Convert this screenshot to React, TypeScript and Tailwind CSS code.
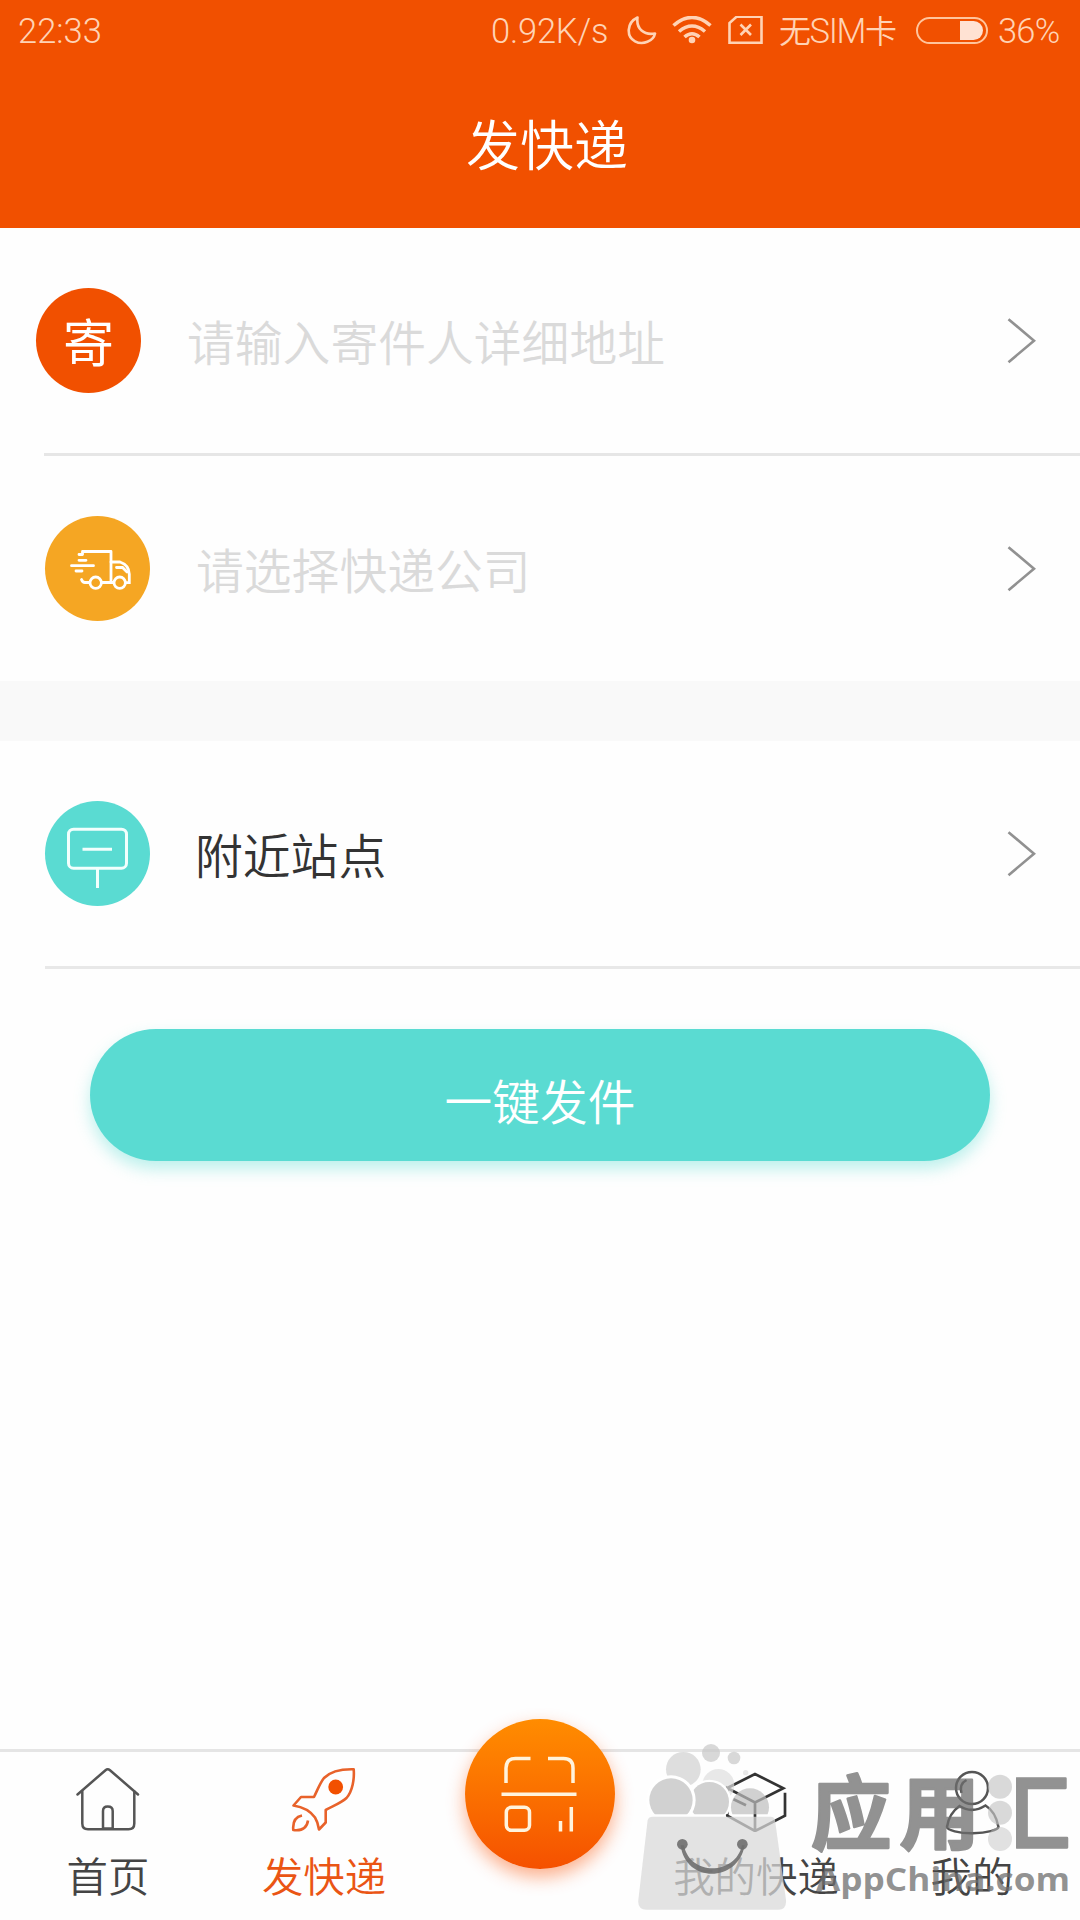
import React from "react";

const Chevron = () => (
  <svg className="mr-[44px] h-[48px] w-[30px] shrink-0" viewBox="0 0 30 48" fill="none" stroke="#919191" strokeWidth="2.6">
    <path d="M2.500 2.200 L28 23.700 L2.500 45.200" />
  </svg>
);

const TruckIcon = () => (
  <svg className="size-[105px]" viewBox="0 0 105 105" fill="none" stroke="#fff" strokeWidth="2.8" strokeLinecap="round">
    <path d="M34 38.5 h3.5 v-3 h28.5 v30.5" strokeLinejoin="round" />
    <path d="M66 46 h9 q9 3 9.300 12 v8.700 h-3 M68 66.500 h-11 M36.500 63.500 q1 3 3.500 3 h4" />
    <path d="M71.500 51.500 h6 l4.500 4.500" />
    <path d="M34 44.300 h7 M26.500 49.700 h22 M31 55 h6" />
    <circle cx="50.700" cy="66.700" r="5.700" />
    <circle cx="74.700" cy="66.700" r="5.700" />
  </svg>
);

const SignIcon = () => (
  <svg className="size-[105px]" viewBox="0 0 105 105" fill="none" stroke="#f2fffd" strokeWidth="3">
    <rect x="23.500" y="28.200" width="58" height="39" rx="5" />
    <path d="M37.500 48.300 h29.500 M52.500 67 v20" />
  </svg>
);

const HomeIcon = () => (
  <svg className="size-[66px]" viewBox="0 0 66 66" fill="none" stroke="#555" strokeWidth="2.5" strokeLinecap="round">
    <path d="M2.500 28.500 L30.500 4.200 Q32.700 2.400 35 4.200 L63 28.500" />
    <path d="M7.300 25.500 V57.500 Q7.300 63.300 13 63.300 H53.500 Q59.300 63.300 59.300 57.500 V25.500" />
    <path d="M28 62.500 V45 Q28 40.500 32.700 40.500 Q37.700 40.500 37.700 45 V62.500 Z" />
  </svg>
);

const RocketIcon = () => (
  <svg className="size-[66px]" viewBox="0 0 66 66" fill="none" stroke="#e8622a" strokeWidth="2.600" strokeLinejoin="round">
    <path d="M62.700 3.300 C51 3 40 5 33 12 C29 17 26.500 24 23 31 H10 L2.500 39.500 C12 41 19 44.500 24 51.500 C26.500 55.500 27.500 60 28 63.500 L34.700 56.500 V44 C43 39.500 50 37 55.500 32 C61.500 25 63.500 13 62.700 3.300 Z" />
    <circle cx="44.700" cy="21" r="7.400" fill="#f25000" stroke="none" />
    <path d="M11 49.500 C4 51 1.500 56 2.300 64 C11 65 16 62 17 54.500" />
  </svg>
);

const BoxIcon = () => (
  <svg className="size-[66px]" viewBox="0 0 66 66" fill="none" stroke="#333" strokeWidth="2.700">
    <path d="M4.300 22 L32 8 L60.300 22.300 L32 36.500 L4.300 22 V49.700 L32 65 L62 49.700 V26.700 M32 36.500 V64" />
    <path d="M10.500 33.300 L23 39.300" />
  </svg>
);

const UserIcon = () => (
  <svg className="size-[66px] overflow-visible" viewBox="0 0 66 66" fill="none" stroke="#555" strokeWidth="2.500">
    <circle cx="33" cy="22" r="16" />
    <path d="M20.500 40 C12 46 9 54 8 61 C8 64 20 67.500 34 67.300 C48 67 59 64 59.500 61 C58 53 54 44 46.500 39.500 Q33 48 20.500 40 Z" />
    <path d="M22.500 27 Q20 18 27.500 14" />
  </svg>
);

const tabs = [
  { label: "首页", icon: <HomeIcon /> },
  { label: "发快递", icon: <RocketIcon />, active: true },
  null,
  { label: "我的快递", icon: <BoxIcon /> },
  { label: "我的", icon: <UserIcon /> },
];

const StatusBar = () => (
  <div className="flex h-[62px] items-center pl-[18px] pr-[18px] font-[Roboto,'Noto_Sans_CJK_SC',sans-serif] text-[34.500px] font-[350] leading-[40px] text-[#ffd3b5]">
    <span className="w-[88px] whitespace-nowrap">22:33</span>
    <span className="ml-auto w-[118px] whitespace-nowrap tracking-[-0.2px]">0.92K/s</span>
    <svg className="ml-[18px] h-[30px] w-[30px]" viewBox="0 0 30 30" fill="none" stroke="currentColor" strokeWidth="2.600" strokeLinejoin="round">
      <path d="M10.500 1.500 C-1 7 -.5 21 8 25.300 C16 29.500 26.500 25 28 17.500 C17 19.500 9 13 10.500 1.500 Z" />
    </svg>
    <svg className="ml-[15px] h-[30px] w-[40px]" viewBox="0 0 40 30" fill="none" stroke="currentColor" strokeWidth="3.600">
      <path d="M1.500 9.500 Q20 -6.500 38.500 9.500 M7 15.500 Q20 4.500 33 15.500 M12.500 21 Q20 14.500 27.500 21" />
      <circle cx="20" cy="24" r="3.300" fill="currentColor" stroke="none" />
    </svg>
    <svg className="ml-[16px] h-[30px] w-[36px]" viewBox="0 0 36 30" fill="none" stroke="currentColor" strokeWidth="2.600">
      <path d="M8.500 .800 H33.500 V26.800 H1.500 V7 Z M12.500 8.500 L23 19 M23 8.500 L12.500 19" />
    </svg>
    <span className="ml-[15px] w-[122px] whitespace-nowrap tracking-[-1.4px]">
      <span className="text-[32px]">无</span>SIM<span className="text-[32px]">卡</span>
    </span>
    <div className="-mt-[2px] ml-[15px] flex h-[27px] w-[72px] items-center justify-end rounded-full border-2 border-[#ffc49c] pr-[3px]">
      <div className="h-[19px] w-[23px] rounded-r-full bg-[#ffe2d3]" />
    </div>
    <span className="ml-[10px] w-[64px] whitespace-nowrap tracking-[-0.8px]">36%</span>
  </div>
);

const Watermark = () => (
  <svg className="pointer-events-none absolute bottom-0 right-0 h-[200px] w-[460px]" viewBox="0 0 1380 600">
    <defs>
      <clipPath id="bubbles">
        <rect x="0" y="0" width="600" height="283" />
      </clipPath>
      <clipPath id="frame">
        <rect x="1188" y="100" width="192" height="320" />
      </clipPath>
    </defs>
    <g clipPath="url(#bubbles)" fill="#bdbdbd" fillOpacity=".7">
      <circle cx="190" cy="148" r="52" fill="#d0d0d0" />
      <circle cx="273" cy="99" r="27" fill="#c8c8c8" />
      <circle cx="342" cy="114" r="19" fill="#c8c8c8" />
      <circle cx="377" cy="158" r="8" fill="#dedede" />
      <circle cx="295" cy="195" r="48" fill="#dedede" />
      <circle cx="268" cy="245" r="66" fill="#fff" fillOpacity="1" />
      <circle cx="268" cy="245" r="59" />
      <circle cx="390" cy="262" r="57" />
      <circle cx="153" cy="240" r="74" fill="#fff" fillOpacity="1" />
      <circle cx="153" cy="240" r="65" />
    </g>
    <path d="M98 290 H452 Q462 290 465 300 L498 540 Q500 569 475 569 H80 Q52 569 55 540 L83 300 Q86 290 98 290 Z" fill="#d9d9d9" fillOpacity=".73" />
    <g fill="#6e6e6e" fillOpacity=".9">
      <circle cx="187" cy="373" r="16" />
      <circle cx="367" cy="373" r="16" />
      <path d="M182 376 C196 490 354 490 374 376 L366 376 C346 468 208 468 192 376 Z" />
    </g>
    <g fill="#c4c4c4" fillOpacity=".65">
      <circle cx="1140" cy="200" r="36" />
      <circle cx="1140" cy="278" r="36" />
      <circle cx="1140" cy="357" r="36" fillOpacity=".5" />
    </g>
    <g className="font-['Noto_Sans_CJK_SC',sans-serif] font-bold" fill="#6e6e6e" opacity=".75">
      <text x="572" y="368" fontSize="242" stroke="#6e6e6e" strokeWidth="7" strokeLinejoin="round">应</text>
      <text x="838" y="368" fontSize="242" stroke="#6e6e6e" strokeWidth="7" strokeLinejoin="round">用</text>
      <text x="1108" y="368" fontSize="242" stroke="#6e6e6e" strokeWidth="7" strokeLinejoin="round" clipPath="url(#frame)">汇</text>
    </g>
    <text className="font-['Open_Sans',sans-serif] font-bold" x="588" y="514" fontSize="96" textLength="762" lengthAdjust="spacingAndGlyphs" fill="#6e6e6e" fillOpacity=".75">
      AppChina.com
    </text>
  </svg>
);

const App = () => {
  return (
    <div className="relative flex h-[1920px] w-[1080px] flex-col overflow-hidden bg-[#fefefe] font-['Noto_Sans_CJK_SC',sans-serif] font-[350]">
      {/* Header */}
      <header className="h-[228px] shrink-0 bg-[#f15000]">
        <StatusBar />
        <h1 className="mt-[41px] pl-[14px] text-center text-[54px] font-[350] leading-[80px] text-white">发快递</h1>
      </header>

      {/* Sender */}
      <div className="flex h-[225px] shrink-0 items-center pl-[36px]">
        <div className="flex size-[105px] items-center justify-center rounded-full bg-[#f15000] text-[51px] font-normal leading-none text-white">寄</div>
        <span className="ml-[46px] flex-1 text-[47.800px] leading-none text-[#dadada]">请输入寄件人详细地址</span>
        <Chevron />
      </div>
      <div className="ml-[44px] h-[3px] shrink-0 bg-[#e6e6e6]" />

      {/* Courier company */}
      <div className="flex h-[225px] shrink-0 items-center pl-[45px]">
        <div className="size-[105px] rounded-full bg-[#f5a623]">
          <TruckIcon />
        </div>
        <span className="ml-[46px] flex-1 text-[47.800px] leading-none text-[#dadada]">请选择快递公司</span>
        <Chevron />
      </div>
      <div className="h-[60px] shrink-0 bg-[#f9f9f9]" />

      {/* Nearby stations */}
      <div className="flex h-[225px] shrink-0 items-center pl-[45px]">
        <div className="size-[105px] rounded-full bg-[#5adbd2]">
          <SignIcon />
        </div>
        <span className="ml-[45px] flex-1 text-[47.800px] leading-none text-[#333]">附近站点</span>
        <Chevron />
      </div>
      <div className="ml-[45px] h-[3px] shrink-0 bg-[#e8e8e8]" />

      <button className="mx-[90px] mt-[60px] h-[132px] shrink-0 rounded-full bg-[#5adbd2] pt-[10px] text-[47.700px] font-[350] leading-none text-white shadow-[0_8px_16px_rgba(90,219,210,0.4)]">
        一键发件
      </button>

      {/* Tab bar */}
      <nav className="mt-auto grid h-[171px] shrink-0 grid-cols-5 border-t-[3px] border-[#e5e5e5]">
        {tabs.map((tab, i) =>
          tab ? (
            <div key={i} className={tab.active ? "flex flex-col items-center pt-[14px] text-[#ea5514]" : "flex flex-col items-center pt-[14px] text-[#444]"}>
              {tab.icon}
              <span className="mt-[21px] whitespace-nowrap text-[41.400px] leading-[42px]">{tab.label}</span>
            </div>
          ) : (
            <div key={i} className="flex justify-center">
              <div className="-mt-[33px] size-[150px] rounded-full bg-linear-to-b from-[#ff8c00] to-[#f55000] shadow-[0_8px_18px_rgba(250,80,0,0.45)]">
                <svg className="size-[150px]" viewBox="1 0 150 150" fill="none" stroke="#fff3dc" strokeWidth="3.500">
                  <path d="M42 64 V49 Q42 39.500 51.500 39.500 H66.500 M84 39.500 H99.500 Q109 39.500 109 49 V64" />
                  <path d="M37.500 75.300 H112.500 M96.500 102 V112.500 M107.300 88 V112.500" />
                  <rect x="42.300" y="88.300" width="23.200" height="23" rx="5" />
                </svg>
              </div>
            </div>
          )
        )}
      </nav>

      <Watermark />
    </div>
  );
};

export default App;
